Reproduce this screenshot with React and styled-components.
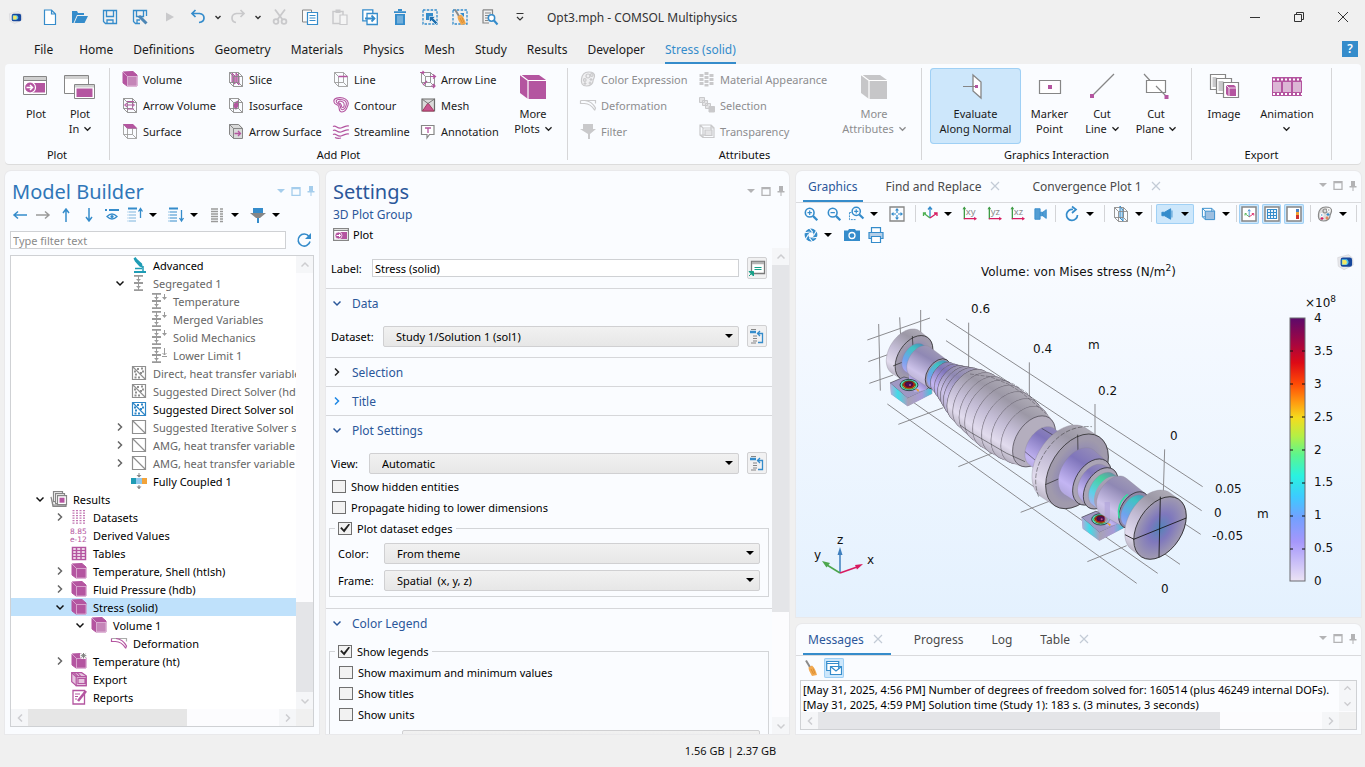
import React from "react";
import styled, { createGlobalStyle, css } from "styled-components";

const P = "#b455a0";
const G = "#868686";
const B = "#358ccb";
const L = "#c9c9cb";

const Global = createGlobalStyle`
  * { box-sizing: border-box; }
  body { margin: 0; background: #f0f0f0; color: #1a1a1a; overflow: hidden;
    font: 11px/15px "Noto Sans", "Open Sans", sans-serif; }
  button, input, select { font: inherit; color: inherit; margin: 0; }
  button { background: none; border: 0; padding: 0; }
  svg { display: block; flex: none; }
  ul { list-style: none; margin: 0; padding: 0; }
`;

/* ---------- icons ---------- */

const Wire = ({ c = G }) => (
  <path d="M1.5 1.5h9v10h-9zM5.5 5.5h9v10h-9zM1.5 1.5l4 4M10.5 1.5l4 4M1.5 11.5l4 4M10.5 11.5l4 4" fill="none" stroke={c} opacity=".85" />
);
const Solid = ({ c = P, front = P }) => (
  <>
    <path d="M1 1l10-.5 4 3.500v11H5l-4-3z" fill={c} stroke={c} strokeLinejoin="round" />
    <path d="M5.500 5.500h9.500v9.500H5.500z" fill={front} stroke="#f3dcee" strokeOpacity=".7" strokeWidth=".8" />
    <path d="M1 1l4.500 4.500" stroke="#f3dcee" strokeOpacity=".7" strokeWidth=".8" />
  </>
);
const Magnifier = ({ sign }) => (
  <g fill="none" stroke={B} strokeWidth="1.800">
    <circle cx="6.500" cy="6.500" r="5" /><path d="M10.200 10.200l5 5" strokeWidth="2.600" />
    <path d={sign} strokeWidth="1.400" />
  </g>
);
const Seg = () => (
  <g stroke="#9a9a9a" fill="#9a9a9a">
    <path d="M3 .8h9M3 15.200h9M3 8h9" strokeWidth="1.800" /><path d="M7.500 1v14" />
    <path d="M5 4h5l-2.500 2.500zM5 11h5l-2.500 2.500z" stroke="none" />
  </g>
);
const SegSub = ({ base }) => (
  <g stroke="#9a9a9a" fill="#9a9a9a">
    <path d="M1 .8h9M1 15.200h9M1 8h9" strokeWidth="1.800" /><path d="M5.500 1v14M13.500 1v5" />
    <path d="M3 4h5L5.500 6.500zM3 11h5l-2.500 2.500z" stroke="none" />
    {base ? <path d="M11 9.500h5M13.500 2v6M11.500 6l2 2 2-2" fill="none" /> : <path d="M11 4h5l-2.500 3z" stroke="none" />}
  </g>
);
const Matrix = ({ c, dots }) => (
  <g fill="none" stroke={c}>
    <path d="M1.500 1.500h13v13h-13zM1.500 1.500l13 13" strokeWidth="1.200" />
    {dots && <path d="M6 4h2M10 3.500h2M11 6.500h2M3 6.500h2M4 9.500h2M7 12.500h2M3.500 12.500h2M9 8h2" strokeWidth="2" />}
  </g>
);
const Planes = ({ label }) => (
  <>
    <path d="M2.500 14V1.500" stroke="#3f9b45" strokeWidth="1.400" /><path d="M.5 3.500l2-3 2 3z" fill="#3f9b45" />
    <path d="M2 13.500h12" stroke="#d81b60" strokeWidth="1.400" /><path d="M13 11.500l3 2-3 2z" fill="#d81b60" />
    <text x="4" y="9.500" fontSize="10" fill="#8a8a8a" fontFamily="Noto Sans, sans-serif">{label}</text>
  </>
);
const Triad = () => (
  <g fill="none" strokeWidth="1.300">
    <path d="M8 12V1M6 3.500L8 1l2 2.500" stroke={B} /><path d="M8 12L1.500 7M4 7H1.500v3" stroke="#4caf50" />
    <path d="M8 12l6.500-4.500M12 7h3v3" stroke="#d81b60" />
  </g>
);
const Lines = ({ c = B, arrow }) => (
  <>
    <path d="M1 1.500h9" stroke={B} strokeWidth="2" />
    <path d="M2 5h7M2 8h7M2 11h7M2 14h7" stroke={c} strokeWidth="1.200" />
    <path d="M.5 5h1M.5 8h1M.5 11h1M.5 14h1" stroke={c} strokeWidth="1.200" />
    <path d={arrow} stroke={B} fill="none" strokeWidth="1.300" />
  </>
);
const Logo = () => (
  <>
    <path d="M1.500 4l9.500-2.500 3.500 3 .5 6L7 14.500l-5-3z" fill="#e9e9ec" stroke="#d4d4d8" strokeWidth=".6" />
    <rect x="4" y="4" width="10" height="8" rx="2" fill="#16479c" />
    <path d="M5 5.500h4.500q3 2.500 0 5H5z" fill="#55c4e8" /><path d="M5.500 6h3q2 2 0 4h-3z" fill="#f5e663" />
  </>
);
const Palette = ({ off }) => (
  <g stroke={off ? L : "#8a8a8a"} fill={off ? "#f0f0f2" : "#dcdcdc"} strokeWidth="1.200">
    <path d="M8.500 1C13 .8 15 3 14.500 5.500S13 8 13 10s-2 5-6.500 5S1 12 1.500 8 4 1.200 8.500 1z" />
    <circle cx="8" cy="5" r="2" /><circle cx="11.800" cy="4" r="1.300" fill={off ? "none" : "#8a8a8a"} stroke={off ? L : "#fff"} />
    <circle cx="4.800" cy="9" r="1.300" fill={off ? "none" : "#358ccb"} stroke={off ? L : "#fff"} />
    <path d="M3.500 12.500h3M5 11v3" stroke={off ? L : "#d81b60"} /><path d="M9.500 8.500h3M11 7v3" stroke={off ? L : "#358ccb"} />
    <path d="M8.500 12h3M10 10.500v3" stroke={off ? L : "#e8743b"} />
  </g>
);
const Deform = ({ c, d }) => (
  <g fill="none" stroke={c} strokeWidth="1.200">
    <path d="M.5 3.500h15v3" stroke={d} /><path d="M.5 3.500v3h4C9 6.500 12 9 14.500 13M5 3.500C10 4 13 6.500 15.500 11l-1 2.500" />
  </g>
);
const Broom = () => (
  <>
    <path d="M3 .5L7.500 8" stroke="#8a8a8a" strokeWidth="2" />
    <path d="M5.500 7.500l3.500-2c3 2.500 4 6 5 9.500l-5 1C7.500 12.500 5.500 11 5.500 7.500z" fill="#f2a950" />
    <path d="M8 9l2.500 5M10 8.500l2 5" stroke="#c97c1e" strokeWidth=".6" />
  </>
);

const ICONS = {
  logo: <Logo />,
  doc: <path d="M2.500 1h7l4 4v10.500h-11zM9.500 1v4h4" fill="#fff" stroke={B} strokeWidth="1.200" />,
  open: <path d="M0 2h5l1 2h6v2H5l-3.500 8H0zM5.500 7H16l-3.500 7H2.500z" fill={B} />,
  save: <g fill="none" stroke={B} strokeWidth="1.300"><path d="M1.500 1.500h13v13h-11l-2-2zM4.500 1.500v6h7v-6M5 14.500V11h6v3.500" /></g>,
  saveas: <g fill="none" stroke={B} strokeWidth="1.300"><path d="M14.500 7V1.500h-13v11l2 2H8M4.500 1.500v6h7v-6M5 14V11h3" /><path d="M7 7l7.500 7.500" strokeWidth="3" stroke="#4d86b5" /></g>,
  play: <path d="M4 3.500l8 4.500-8 4.500z" fill={L} />,
  undo: <path d="M5.500 1L2 4.500 5.500 8M2 4.500h7.500q4.500.5 4.500 4.500t-5 4.500" fill="none" stroke={B} strokeWidth="1.700" />,
  redo: <path d="M10.500 1L14 4.500 10.500 8M14 4.500H6.500Q2 5 2 9t4 4.500" fill="none" stroke={L} strokeWidth="1.700" />,
  cut: <g fill="none" stroke={L} strokeWidth="1.800"><path d="M3 .5l7.500 10M13 .5L5.500 10.500" /><circle cx="4" cy="12.500" r="2.400" /><circle cx="12" cy="12.500" r="2.400" /></g>,
  copy: <><path d="M.5 1h9v12h-9z" fill="#fafafa" stroke={G} /><path d="M5.500 3.500h10v12h-10z" fill="#fff" stroke={B} strokeWidth="1.200" /><path d="M7.500 6.500h6M7.500 9h6M7.500 11.500h6" stroke={B} /></>,
  paste: <><path d="M1 2.500h10v12H1z" fill="none" stroke={L} strokeWidth="1.500" /><path d="M3.500.5h5V4h-5z" fill={L} /><path d="M8 6h7v9.500H8z" fill="#f5f5f5" stroke={L} strokeWidth="1.200" /></>,
  dup: <g fill="#fff" stroke={B} strokeWidth="1.300"><path d="M.8.8h10v11H.8z" /><path d="M5 4.500h10.300v11H5z" /><path d="M3 9.500h9M9.500 6.500l3 3-3 3" fill="none" strokeWidth="1.800" /></g>,
  trash: <><path d="M2 3.200h12M6 1h4" stroke={B} strokeWidth="1.800" /><path d="M3 5h10v11H3z" fill={B} /><path d="M6 6.500v8M8 6.500v8M10 6.500v8" stroke="#cfe4f4" strokeWidth=".8" /></>,
  select: <><path d="M1 1h14v14H1z" fill="none" stroke={B} strokeWidth="1.300" strokeDasharray="2.500 1.300" /><path d="M4 4h7v7H4z" fill={B} /><path d="M7.500 7.500h6l-2 1.800L15.500 13.500 13.500 15.500 9.500 11.500 7.500 13.500z" fill="#1f6fae" stroke="#fff" strokeWidth=".6" /></>,
  clear: <><path d="M1 1h14v14H1z" fill="none" stroke={B} strokeWidth="1.300" strokeDasharray="2.500 1.300" /><path d="M8 4h4v4z" fill={B} /><Broom /></>,
  find: <><path d="M1 .8h9.500V9M7 14H1V.8" fill="none" stroke={G} strokeWidth="1.200" /><path d="M3 4h6M3 6.500h5M3 9h3M3 11.500h3" stroke={G} /><circle cx="9.500" cy="9" r="3.200" fill="#fff" stroke={B} strokeWidth="1.500" /><path d="M12 11.500l3.500 4" stroke={B} strokeWidth="2" /></>,
  more: <path d="M4.500 4.500h7M5 8l3 3 3-3" fill="none" stroke="#333" strokeWidth="1.200" />,
  chev: <path d="M5.500 7L8 9.500 10.500 7" fill="none" stroke="#333" strokeWidth="1.400" />,
  min: <path d="M3 8.500h10" stroke="#333" />,
  restore: <path d="M3.500 5.500h7v7h-7zM5.500 5.500v-2h7v7h-2" fill="none" stroke="#333" />,
  close: <path d="M3 3l10 10M13 3L3 13" stroke="#333" />,
  tabx: <path d="M4 4l8 8M12 4l-8 8" stroke="#c3cbd6" strokeWidth="1.200" />,
  volume: <Solid front="#c585b8" />,
  solid: <Solid />,
  solidStar: <><Solid /><circle cx="12.500" cy="2.500" r="3.600" fill="#fff" /><path d="M12.500 0v5.500M9.700 2.700h5.600M10.500.7l4 4M14.500.7l-4 4" stroke="#808080" /></>,
  arrowvol: <><Wire /><path d="M3 8h9M5 6L2.500 8 5 10M10 6l2.500 2-2.500 2M5 4.500h7M5 12h7" fill="none" stroke={P} /></>,
  surface: <><Wire c="#999" /><path d="M1 1h10l4.500 4.500H5z" fill={P} /></>,
  slice: <><path d="M4 2l3 3v8l-3-2zM8 2l3 3v9l-3-3z" fill="#c78bbb" stroke={P} /><Wire /></>,
  iso: <><path d="M7 5l4-2v5l-3 5-3-4z" fill={P} /><Wire /></>,
  arrowsurf: <><path d="M1 1h10l4 4v10H5l-4-4z" fill="#d9d9d9" /><path d="M1.500 1.500h9l4 4h-9zM1.500 1.500v10l4 4v-10M5.500 5.500h9v10h-9z" fill="none" stroke={G} /><path d="M6.500 10.500H12M10 8l2.500 2.500L10 13" fill="none" stroke={P} strokeWidth="1.300" /></>,
  line: <><Wire c="#999" /><path d="M5.500 5.500h9" stroke={P} strokeWidth="1.500" /></>,
  contour: <g fill="none" stroke={P} strokeWidth="1.100"><path d="M1 5C0 1 6 0 10 1s6 4 5 7-2 7-6 7-2-4-3.500-6S1.500 8 1 5z" /><path d="M3.300 4.700c-.5-2.500 3-2.500 6-2s4.500 2.500 4 5-1.500 5-4 5-1-2.500-2.500-4.500-3-1.500-3.500-3.500z" /><path d="M5.500 5c0-1.500 5-1 5.500 1.500s0 4-1.500 4-.5-1.500-1.500-3S5.500 6.500 5.500 5z" /></g>,
  stream: <path d="M0 3.500c3-2 4 2.500 8 1.500s5-3 8-2M0 7.500c3-2 4 2.500 8 1.500s5-3 8-2M0 11.500c3-2 4 2.500 8 1.500s5-3 8-2M2 14.500c2 1 4 1 6 .5" fill="none" stroke={P} strokeWidth="1.200" />,
  arrowline: <><Wire /><path d="M0 1.500h4M2.500 0L4 1.500 2.500 3M10 5.500h5M13 3.500l2.500 2-2.500 2M3 14l4-4M11 15h4M13 13l2 2-2 2" fill="none" stroke={P} strokeWidth="1.200" /></>,
  mesh: <><path d="M2 2h12.500v12H2z" fill="#dadada" stroke="#6b6b6b" strokeWidth="1.200" /><path d="M8 6l-5.500 8h11.500z" fill="#c85590" stroke="#a33b5e" /><path d="M2 2l6 4.500L14.500 2" fill="none" stroke="#777" /></>,
  annot: <><path d="M1.500 2.500h12.500v9H9.500l-2.500 3.500v-3.500H1.500z" fill="#fff" stroke={G} strokeWidth="1.200" /><path d="M5 5h6M8 5v5" stroke={P} strokeWidth="1.300" /></>,
  palette: <Palette />,
  paletteOff: <Palette off />,
  deformOff: <Deform c={L} d={L} />,
  deform: <Deform c={P} d="#aaa" />,
  filterOff: <path d="M3 1h10v5h3l-6 5v5H8v-5L0 6h3z" fill={L} />,
  matOff: <path d="M5.500 1h4v3h-4zM5.500 5h4v3h-4zM5.500 9h4v3h-4zM5.500 13h4v2.500h-4zM.5 3h4v3h-4zM.5 7h4v3h-4zM.5 11h4v3h-4zM10.500 3h4v3h-4zM10.500 7h4v3h-4zM10.500 11h4v3h-4z" fill={L} />,
  selOff: <g fill="#e4e4e6" stroke={L}><path d="M.5.5h5v5h-5zM3.500 3.500h5v5h-5zM6.500 6.500h5v5h-5z" /><path d="M10 9.500h5.500V15H10z" fill={L} /></g>,
  transOff: <g fill="none" stroke={L} strokeWidth="1.200"><path d="M1 2h11v10H1zM4 5h11v9.500H4zM1 2l3 3M12 2l3 3M1 12l3 2.500" /><path d="M6 7h7v5.500H6z" fill="#e4e4e6" /></g>,
  plotBig: <><path d="M1.500 3.500h23v18h-23z" fill="#fff" stroke={G} /><path d="M2 4h22v3.500H2z" fill="#d0d0d0" /><path d="M1 7.500h24" stroke={G} /><path d="M10 10h13v9.500H10z" fill={P} /><circle cx="8" cy="14.500" r="5.500" fill={P} stroke="#fff" strokeWidth="1.200" /><path d="M4.500 14.500h6M8 12l2.500 2.500L8 17" stroke="#fff" strokeWidth="1.500" fill="none" /></>,
  plotin: <><path d="M-1.500 2.500h24v18h-24z" fill="#fff" stroke={G} /><path d="M-1 3h23v3H-1z" fill="#d0d0d0" /><path d="M8.500 11.500h20v14h-20z" fill="#fff" stroke={G} /><path d="M9 12h19v2.500H9z" fill="#d0d0d0" /><path d="M10.500 15.500h16v8.500h-16z" fill={P} /></>,
  cubeBig: <><path d="M1 2h19l7 5v19H9l-8-6z" fill={P} /><path d="M1 1.500l8 6V26.500M9 7.500h18" stroke="#fff" strokeWidth="1.200" fill="none" /></>,
  cubeBigOff: <><path d="M1 2h19l7 5v19H9l-8-6z" fill="#c6c6c8" /><path d="M1 1.500l8 6V26.500M9 7.500h18" stroke="#fff" strokeWidth="1.200" fill="none" /></>,
  evalBig: <><path d="M11 2l8 7v16l-8-7z" fill="#fff" stroke={G} strokeWidth="1.300" /><path d="M1 13.500h13" stroke={G} /><path d="M13 12h3v3h-3z" fill={P} /></>,
  marker: <><path d="M3.500 7.500h21v13h-21z" fill="#fff" stroke={G} strokeWidth="1.200" /><path d="M12 12h4v4h-4z" fill={P} /></>,
  cutline: <><path d="M4 23L26 1" stroke={G} strokeWidth="1.200" /><path d="M2 21h4v4H2z" fill={P} /></>,
  cutplane: <><path d="M4.500 7.500h19v12h-19z" fill="#fff" stroke={G} strokeWidth="1.200" /><path d="M2 1l6 6.500M14 13l10 10" stroke={G} strokeWidth="1.200" /><path d="M22.500 22h4v4h-4z" fill={P} /></>,
  image: <g fill="#fff" stroke={G} strokeWidth="1.200"><path d="M.500 1.500h15v15h-15z" /><path d="M2.500 4h4v10h-4z" fill={L} stroke="none" /><path d="M6.500 5.500h15v15h-15z" /><path d="M8.500 8h5v10h-5z" fill={L} stroke="none" /><path d="M13.500 9.500h15v15h-15z" /><path d="M16 12h8l2 2v9h-8l-2-2z" fill={P} stroke="none" /><path d="M16 12l3 3h7M19 15v8" stroke="#fff" fill="none" strokeWidth=".8" /></g>,
  film: <><path d="M-1 4h30v19H-1z" fill={P} /><path d="M0 9h8v10H0zM10 9h8v10h-8zM20 9h8v10h-8z" fill="#dcb6d5" /><path d="M0 6.500h29M0 21h29" stroke="#fff" strokeWidth="2" strokeDasharray="2 2" /></>,
  left: <path d="M15 8H2M6 4.500L2 8l4 3.500" fill="none" stroke={B} strokeWidth="1.500" />,
  right: <path d="M1 8h13M10 4.500L14 8l-4 3.500" fill="none" stroke="#9a9a9a" strokeWidth="1.500" />,
  up: <path d="M8 15V2M5 6L8 2l3 4" fill="none" stroke={B} strokeWidth="1.500" />,
  down: <path d="M8 1v13M5 10l3 4 3-4" fill="none" stroke={B} strokeWidth="1.500" />,
  eye: <><path d="M1 3h2M5 3h10" stroke={B} strokeWidth="2" /><path d="M3 9.500q5-5 10 0-5 5-10 0z" fill="none" stroke={B} strokeWidth="1.300" /><circle cx="8" cy="9.500" r="1.600" fill={B} /></>,
  linesUp: <Lines c="#7cb3dd" arrow="M13.500 11V2M11.500 4.500l2-3 2 3" />,
  linesDown: <Lines arrow="M13.500 3v10M11.500 11l2 3 2-3" />,
  columns: <path d="M2 2h7M2 4.500h7M2 7h7M2 9.500h7M2 12h7M2 14.500h7M11 2h3M11 4.500h3M11 7h3M11 9.500h3M11 12h3M11 14.500h3" stroke="#9a9a9a" strokeWidth="1.300" />,
  funnel: <><path d="M3 1h10v5H3z" fill={B} /><path d="M0 6h16l-6 5H6z" fill={G} /><path d="M7 11h2v5H7z" fill={B} /></>,
  refresh: <><path d="M13 4.500A6 6 0 1 0 14 9.500" fill="none" stroke={B} strokeWidth="1.600" /><path d="M15 1v6H9z" fill={B} /></>,
  scope: <g fill="#1f9cb5"><path d="M2.500 1.500L4.500 0 6 2l5 4.500 1 4.500-3.500-1.500L4 4.500z" /><path d="M3 14h12v2H3z" /><path d="M4 11.500h7M12 9v5" stroke="#1f9cb5" strokeWidth="1.500" /></g>,
  seg: <Seg />,
  sub: <SegSub />,
  subBase: <SegSub base />,
  matrix: <Matrix c="#8f8f8f" dots />,
  matrixOn: <Matrix c="#2f86c6" dots />,
  diag: <Matrix c="#8f8f8f" />,
  coupled: <><path d="M0 5h5v6H0z" fill="#1f9cb5" /><path d="M5 5h6v6H5z" fill="#8fc8ee" /><path d="M11 5h5v6h-5z" fill="#f2a33a" /><path d="M8 0v4M8 12v4" stroke={G} /><path d="M5.500 2h5L8 4.500zM5.500 13.500h5L8 16z" fill={G} /></>,
  results: <g fill="#fff" stroke={G} strokeWidth="1.200"><path d="M0 6l2 8h13v1.500H2z" fill="#ccc" /><path d="M2.500.7h9v10h-9z" /><path d="M4.500 2.700h9v10h-9z" /><path d="M6.500 4.700h9v9h-9z" /><path d="M8.500 6.700h5v5h-5z" fill={P} stroke="none" /></g>,
  datasets: <path d="M2.500 1v14M6 1v14M9.500 1v14M13 1v14" stroke={P} strokeWidth="2" strokeDasharray="1.300 1.200" opacity=".8" />,
  derived: <g fill={P} fontFamily="DejaVu Sans, sans-serif" fontSize="7.500"><text x="-1" y="7">8.85</text><text x="-1" y="15">e-12</text></g>,
  table: <path d="M1.500 2.500h13v12h-13zM1.500 5.500h13M1.500 8.500h13M1.500 11.500h13M5.500 2.500v12M10 2.500v12" fill="none" stroke={P} strokeWidth="1.500" />,
  export: <g fill="#e5c5df" stroke={P} strokeWidth="1.200"><path d="M.7 1.700h10l4.500 3v10h-10l-4.500-4z" /><path d="M5.200 5.700h10v9h-10zM.7 1.700l4.500 4M7 7.500h7v5H7zM3 1.700l4 4M6 1.700l4 4" /></g>,
  reports: <><path d="M2 1.500h11.500v13.500H2z" fill="#fff" stroke={P} strokeWidth="1.300" /><path d="M4 5h5M4 7.500h3M4 10h2" stroke={P} /><path d="M15 2L7 12" stroke={P} strokeWidth="2.600" /></>,
  plot: <><path d="M.6 2.600h14.800v11.800H.6z" fill="#fff" stroke={G} strokeWidth="1.200" /><path d="M1 4.500h14" stroke={G} /><path d="M7 6h7v7H7z" fill={P} /><circle cx="5.500" cy="9.500" r="3.500" fill={P} stroke="#fff" strokeWidth=".7" /><path d="M3.500 9.500h4M6 8l1.500 1.500L6 11" stroke="#fff" fill="none" /></>,
  goto: <><path d="M2.500 1.500h13v12h-13z" fill="#fff" stroke="#7a7a7a" strokeWidth="1.300" /><path d="M3 3h12" stroke="#b5b5b5" strokeWidth="2.500" /><path d="M5.500 7.500h7M5.500 9.500h7" stroke="#17a088" strokeWidth="1.200" /><path d="M0 16l3.500-3.500M0 11.500h4.500V16z" fill="#17a088" stroke="#17a088" /></>,
  tree: <><path d="M2 1.500h5M4 8h4M4 10.500h4M4 13h4M2 15h5" stroke={G} strokeWidth="1.200" /><path d="M1 4h6" stroke={B} strokeWidth="2.500" /><path d="M8 5.500h5.500v9H9M11 3L8.500 5.500 11 8" fill="none" stroke={B} strokeWidth="1.300" /></>,
  zoomin: <Magnifier sign="M4 6.500h5M6.500 4v5" />,
  zoomout: <Magnifier sign="M4 6.500h5" />,
  zoombox: <><path d="M.5 7v7.500H8M.5 7H3" fill="none" stroke={B} strokeDasharray="2 1" /><g transform="translate(2 0) scale(.88)"><Magnifier sign="M4 6.500h5M6.500 4v5" /></g></>,
  fit: <><path d="M1 1h14v14H1z" fill="none" stroke={G} strokeWidth="1.300" /><path d="M8 2l2 2.500H6zM8 14l-2-2.500h4zM2 8l2.500-2v4zM14 8l-2.500 2V6z" fill={B} /><path d="M8 4v3M8 9v3M4 8h3M9 8h3" stroke={B} strokeWidth="1.200" /></>,
  triad: <Triad />,
  xy: <Planes label="xy" />, yz: <Planes label="yz" />, xz: <Planes label="xz" />,
  book: <path d="M1 2h6v12H1zM7 6h3l4-3v10l-4-3H7M10 6v4" fill={B} stroke={B} fillOpacity=".85" />,
  rotate: <path d="M9 3.500A5.500 5.500 0 1 0 13.500 9M8 .5l4 3-4 3.500" fill="none" stroke={B} strokeWidth="1.700" />,
  clip: <><path d="M7 0l3 4v11l-3-3z" fill="#bcd9ee" stroke={B} /><Wire /></>,
  light: <path d="M1 6h3l7-4v12L4 10H1zM12.500 4v8" fill={B} stroke={B} />,
  trans: <g stroke={B} fill="#9dbfe0"><path d="M1.500 2.500h10v9h-10z" fill="none" /><path d="M4.500 5.500h10v9h-10z" /><path d="M1.500 2.500l3 3M11.500 2.500l3 3M1.500 11.500l3 3" /></g>,
  axesOn: <><path d="M1 1h14v14H1z" fill="#fff" stroke={G} strokeWidth="1.500" /><g transform="translate(3 3) scale(.65)"><Triad /></g></>,
  gridOn: <><path d="M1 1h14v14H1z" fill="#fff" stroke={G} strokeWidth="1.500" /><path d="M3.500 3.500h9v9h-9zM3.500 6.500h9M3.500 9.500h9M6.500 3.500v9M9.500 3.500v9" fill="none" stroke={B} strokeWidth="1.200" /></>,
  legendOn: <><path d="M1 1h14v14H1z" fill="#fff" stroke={G} strokeWidth="1.500" /><path d="M10 3h3v3h-3z" fill="#4a7fc0" /><path d="M10 6h3v3h-3z" fill="#f0a030" /><path d="M10 9h3v4h-3z" fill="#d0312d" /></>,
  shutter: <><circle cx="8" cy="8" r="5.200" fill="none" stroke={B} strokeWidth="4.200" /><path d="M6 0l4 5M14 3.500l-3 5M15.500 10.500l-6 1M10 16l-4-5M2 12.500l3-5M.5 5.500l6-1" stroke="#fafcff" strokeWidth="1.200" /></>,
  camera: <><path d="M0 3.500h4L5 2h6l1 1.500h4V14H0z" fill={B} /><circle cx="8" cy="8.500" r="3" fill={B} stroke="#fff" strokeWidth="1.300" /></>,
  printer: <g fill="#fff" stroke={B} strokeWidth="1.200"><path d="M3.500.7h9v5h-9z" /><path d="M1 5.500h14v6H1z" fill="#b5cfe8" /><path d="M3.500 9.500h9v6h-9z" /></g>,
  broom: <Broom />,
  mail: <g fill="#fff" stroke={B} strokeWidth="1.200"><path d="M.7 1.500h12v9H.7z" /><path d="M1 3.500h12" /><path d="M4.500 6.500h11v8h-11zM4.500 6.500l5.500 4.500 5.500-4.500" /></g>,
};

const Icon = ({ name, size = 16, box = 16 }) => (
  <svg width={size} height={size} viewBox={`0 0 ${box} ${box}`} overflow="visible" aria-hidden="true">{ICONS[name]}</svg>
);

const Caret = styled.i`
  width: 0; height: 0; flex: none;
  border: solid transparent; border-width: 4px 4px 0;
  border-top-color: ${(p) => p.$color || "#000"};
`;

const Chevron = ({ dir = "down", color = "#222", size = 8 }) => (
  <svg width={size} height={size} viewBox="0 0 8 8" aria-hidden="true">
    <path d={{ down: "M.5 2.500L4 6l3.500-3.500", right: "M2 .5L5.500 4 2 7.500", up: "M.5 5.500L4 2l3.500 3.500", left: "M6 .5L2.500 4 6 7.500" }[dir]} fill="none" stroke={color} strokeWidth="1.500" />
  </svg>
);

/* ---------- frame ---------- */

const Shell = styled.div`
  display: flex; flex-direction: column; height: 100vh; min-width: 1100px;
`;
const TitleBar = styled.header`
  display: flex; align-items: center; height: 34px; padding-left: 8px; flex: none;
`;
const LogoCell = styled.span`width: 27px;`;
const ToolButton = styled.button`
  display: flex; align-items: center; justify-content: center;
  width: ${(p) => p.$w || 30}px; height: 30px;
`;
const WindowTitle = styled.h1`
  font-size: 12px; font-weight: 400; color: #333; margin: 0 auto 0 12px;
`;
const MenuBar = styled.nav`
  display: flex; height: 30px; padding: 0 7px 0 34px; flex: none; align-items: stretch;
`;
const MenuItem = styled.button`
  font-size: 12px; margin-right: 20px;
  border-bottom: 2px solid transparent; border-top: 2px solid transparent;
  &:first-child { margin-right: 26px; }
  ${(p) => p.$active && css`color: ${B}; border-bottom-color: ${B};`}
`;
const Help = styled.button`
  margin: 7px 0 0 auto; width: 16px; height: 16px; background: ${B}; color: #fff; font-size: 12px; line-height: 16px; font-weight: 600;
`;
const Ribbon = styled.section`
  display: flex; height: 100px; margin: 0 4px 7px 5px; flex: none;
  background: #fafcff; border-radius: 4px; box-shadow: 0 1px 0 #dcdcdc;
`;
const Group = styled.div`
  display: flex; flex-direction: column; width: ${(p) => p.$w}px;
  border-right: 1px solid #d6d6d8; border-image: linear-gradient(transparent 5%, #d6d6d8 5% 95%, transparent 95%) 1;
`;
const GroupBody = styled.div`
  display: flex; height: 83px; padding: 2px 0 0 ${(p) => p.$pad || 0}px;
`;
const GroupName = styled.div`text-align: center; color: #111;`;
const SmallGrid = styled.div`
  display: grid; grid-template-columns: ${(p) => p.$cols}; grid-template-rows: repeat(3, 26px); grid-auto-flow: column;
`;
const SmallButton = styled.button`
  display: flex; align-items: center; gap: 5px; white-space: nowrap;
  ${(p) => p.disabled && css`color: #8d8d8f;`}
`;
const BigButton = styled.button`
  display: flex; flex-direction: column; align-items: center; gap: 5px;
  width: ${(p) => p.$w}px; height: 76px; margin-top: 2px; padding-top: 5px; white-space: nowrap;
  border-radius: 4px;
  ${(p) => p.disabled && css`color: #8d8d8f;`}
  ${(p) => p.$active && css`background: #cde7fb; box-shadow: inset 0 0 0 1px #9fd0f5;`}
`;
const Second = styled.span`display: flex; justify-content: center; align-items: center; gap: 5px; height: 15px;`;

const Big = ({ icon, w, l1, l2, menu, active, disabled }) => (
  <BigButton $w={w} $active={active} disabled={disabled}>
    <Icon name={icon} size={28} box={28} />
    <span>{l1}<Second>{l2}{menu && <Chevron size={7} color={disabled ? "#8d8d8f" : "#222"} />}</Second></span>
  </BigButton>
);

const Main = styled.main`
  flex: 1; min-height: 0; display: grid; gap: 7px; padding: 0 4px 0 5px;
  grid-template-columns: 314fr 463fr 565fr;
`;
const Panel = styled.section`
  background: #fafcff; border-radius: 6px 6px 0 0; display: flex; flex-direction: column;
  min-width: 0; min-height: 0; overflow: hidden; box-shadow: 0 0 0 1px #e9e9eb;
  flex: ${(p) => p.$flex || "none"};
`;
const Heading = styled.h2`
  font-size: 20px; line-height: 28px; font-weight: 400; color: #2b579a; margin: 0; flex: 1;
  ${(p) => p.$bright && css`color: #2f76b8;`}
`;
const HeadRow = styled.div`display: flex; align-items: center; padding: 7px 4px 0 7px;`;
const WinToolBox = styled.div`
  display: flex; gap: 6px; align-items: center; align-self: center; padding-bottom: 2px;
  color: ${(p) => (p.$blue ? "#a5cdec" : "#b3b3b5")};
`;
const WinTools = ({ blue }) => (
  <WinToolBox $blue={blue}>
    <svg width="8" height="9" viewBox="0 0 8 9"><path d="M0 2h8L4 6z" fill="currentColor" /></svg>
    <svg width="10" height="9" viewBox="0 0 10 9"><path d="M1 .5h8v8H1zM1 1.500h8" fill="none" stroke="currentColor" strokeWidth="1.300" /></svg>
    <svg width="8" height="10" viewBox="0 0 8 10"><path d="M2 0h4v5h1.500v1.500h-3V10h-1V6.500H.5V5H2z" fill="currentColor" /></svg>
  </WinToolBox>
);

/* ---------- scroll bars ---------- */

const VBar = styled.div`
  width: 17px; display: flex; flex-direction: column; background: #fcfcfe; flex: none;
`;
const HBar = styled.div`height: 17px; display: flex; background: #fcfcfe; flex: none;`;
const ScrollButton = styled.button`
  width: 17px; height: ${(p) => p.$h || 17}px; background: #f5f6f8; display: flex; align-items: center; justify-content: center; flex: none;
`;
const Thumb = styled.div`background: ${(p) => p.$bg || "#e4e5e8"}; flex: ${(p) => p.$f};`;
const Space = styled.div`flex: ${(p) => p.$f};`;

/* ---------- model builder ---------- */

const TreeTools = styled.div`display: flex; align-items: center; height: 18px; padding-left: 7px; gap: 7px;`;
const TreeTool = styled.button`display: flex; align-items: center; gap: 6px; width: ${(p) => p.$w || 16}px;`;
const FilterRow = styled.div`display: flex; align-items: center; gap: 10px; padding: 7px 7px 6px 5px;`;
const TextBox = styled.input`
  height: 18px; flex: 1; min-width: 0; background: #fff; border: 1px solid #cfd1d4; padding: 0 2px; outline: 0;
  &::placeholder { color: #8a8a8a; }
`;
const Tree = styled.div`
  flex: 1; min-height: 0; margin: 0 5px 7px; background: #fff; border: 1px solid #cfd1d4;
  display: flex; flex-direction: column;
`;
const TreeArea = styled.div`display: flex; flex: 1; min-height: 0;`;
const TreeList = styled.ul`flex: 1; min-width: 0; overflow: hidden;`;
const TreeRow = styled.li`
  display: flex; align-items: center; height: 18px; white-space: nowrap; padding-left: ${(p) => 25 + p.$lvl * 20}px;
  color: ${(p) => (p.$dim ? "#666" : "#000")};
  ${(p) => p.$sel && css`background: #bfe1fb;`}
`;
const Twist = styled.span`width: 15px; display: flex; flex: none;`;
const NodeIcon = styled.span`width: 22px; display: flex; flex: none;`;
const Corner = styled.div`width: 17px; background: #f0f0f0;`;

const NODES = [
  [4, "", "scope", "Advanced"],
  [4, "down", "seg", "Segregated 1", 1],
  [5, "", "sub", "Temperature", 1],
  [5, "", "sub", "Merged Variables", 1],
  [5, "", "sub", "Solid Mechanics", 1],
  [5, "", "subBase", "Lower Limit 1", 1],
  [4, "", "matrix", "Direct, heat transfer variable", 1],
  [4, "", "matrix", "Suggested Direct Solver (hd", 1],
  [4, "", "matrixOn", "Suggested Direct Solver sol"],
  [4, "right", "diag", "Suggested Iterative Solver s", 1],
  [4, "right", "diag", "AMG, heat transfer variable", 1],
  [4, "right", "diag", "AMG, heat transfer variable", 1],
  [4, "", "coupled", "Fully Coupled 1"],
  [0, "down", "results", "Results"],
  [1, "right", "datasets", "Datasets"],
  [1, "", "derived", "Derived Values"],
  [1, "", "table", "Tables"],
  [1, "right", "solid", "Temperature, Shell (htlsh)"],
  [1, "right", "solid", "Fluid Pressure (hdb)"],
  [1, "down", "solid", "Stress (solid)", 0, 1],
  [2, "down", "volume", "Volume 1"],
  [3, "", "deform", "Deformation"],
  [1, "right", "solidStar", "Temperature (ht)"],
  [1, "", "export", "Export"],
  [1, "", "reports", "Reports"],
];

function ModelBuilder() {
  return (
    <Panel>
      <HeadRow><Heading $bright>Model Builder</Heading><WinTools blue /></HeadRow>
      <TreeTools>
        {["left", "right", "up", "down", "eye"].map((n) => <TreeTool key={n} aria-label={n}><Icon name={n} /></TreeTool>)}
        {["linesUp", "linesDown", "columns", "funnel"].map((n) => <TreeTool key={n} $w={34} aria-label={n}><Icon name={n} /><Caret /></TreeTool>)}
      </TreeTools>
      <FilterRow>
        <TextBox placeholder="Type filter text" aria-label="Filter" />
        <button aria-label="Refresh"><Icon name="refresh" /></button>
      </FilterRow>
      <Tree>
        <TreeArea>
          <TreeList>
            {NODES.map(([lvl, tw, icon, text, dim, sel], i) => (
              <TreeRow key={i} $lvl={lvl} $dim={dim} $sel={sel}>
                <Twist>{tw && <Chevron dir={tw} color={tw === "right" ? "#666" : "#111"} />}</Twist>
                <NodeIcon><Icon name={icon} /></NodeIcon>{text}
              </TreeRow>
            ))}
          </TreeList>
          <VBar>
            <ScrollButton aria-label="Up"><Chevron dir="up" color="#cdcdd0" /></ScrollButton>
            <Space $f={329} /><Thumb $f={90} />
            <ScrollButton aria-label="Down"><Chevron color="#cdcdd0" /></ScrollButton>
          </VBar>
        </TreeArea>
        <HBar>
          <ScrollButton aria-label="Left"><Chevron dir="left" color="#cdcdd0" /></ScrollButton>
          <Thumb $f={159} $bg="#e6e6e6" /><Space $f={92} />
          <ScrollButton aria-label="Right"><Chevron dir="right" color="#cdcdd0" /></ScrollButton>
          <Corner />
        </HBar>
      </Tree>
    </Panel>
  );
}

/* ---------- settings ---------- */

const SubHead = styled.div`font-size: 12px; line-height: 18px; color: #2b579a; padding-left: 7px;`;
const PlotButton = styled.button`display: flex; align-items: center; gap: 4px; height: 20px; margin-bottom: 4px; padding-left: 7px; align-self: flex-start; color: #000;`;
const Scroller = styled.div`display: flex; flex: 1; min-height: 0;`;
const Form = styled.div`flex: 1; min-width: 0; overflow: hidden; color: #000;`;
const Section = styled.section`
  border-top: 1px solid #d6d7da;
  &:first-child { border: 0; }
`;
const SectionTitle = styled.button`
  display: flex; align-items: center; gap: 11px; height: 28px; padding-left: 7px; width: 100%;
  font-size: 12px; color: #2b579a;
`;
const Field = styled.div`
  display: flex; align-items: center; height: 22px; padding: 0 ${(p) => (p.$inner ? 0 : 5)}px;
  label { width: ${(p) => p.$label}px; flex: none; }
`;
const SquareButton = styled.button`
  width: 20px; height: 22px; margin-left: 8px; display: flex; align-items: center; justify-content: center;
  background: #f1f1f2; border: 1px solid #d0d0d2; border-radius: 2px; flex: none;
`;
const SelectWrap = styled.div`
  display: grid; flex: 1; align-items: center; height: 21px; min-width: 0;
  > * { grid-area: 1 / 1; }
  > i { justify-self: end; margin-right: 6px; pointer-events: none; }
`;
const Select = styled.select`
  appearance: none; width: 100%; height: 21px; padding: 0 20px 0 12px; border: 1px solid #d0d0d2; border-radius: 2px;
  background: linear-gradient(#f1f1f1, #e7e7e7); color: #000; outline: 0;
`;
const Drop = ({ id, value }) => (
  <SelectWrap><Select id={id} defaultValue={value}><option>{value}</option></Select><Caret /></SelectWrap>
);
const CheckLabel = styled.label`
  display: flex; align-items: center; gap: 5px; height: 21px; padding-left: ${(p) => p.$pad || 0}px; width: max-content;
`;
const Box = styled.input.attrs({ type: "checkbox" })`
  appearance: none; width: 14px; height: 13px; border: 1px solid #707070; background: #f2f2f2; flex: none;
  display: grid; place-items: center;
  &:checked::before { content: ""; width: 10px; height: 9px; background: #222;
    clip-path: polygon(2% 52%, 16% 40%, 38% 66%, 86% 2%, 100% 12%, 42% 100%); }
`;
const Frame = styled.fieldset`
  margin: 0 3px; padding: ${(p) => p.$top}px 8px 5px; border: 1px solid #d3d5d8; min-width: 0;
  legend { padding: 0 3px; margin-left: -3px; }
  legend label { height: 20px; }
`;
const Gap = styled.div`height: ${(p) => p.$h}px;`;

const Check = ({ text, on, pad }) => <CheckLabel $pad={pad}><Box defaultChecked={on} />{text}</CheckLabel>;

function Settings() {
  return (
    <Panel>
      <HeadRow><Heading>Settings</Heading><WinTools /></HeadRow>
      <SubHead>3D Plot Group</SubHead>
      <PlotButton><Icon name="plot" />Plot</PlotButton>
      <Scroller>
        <Form>
          <Section>
            <Gap $h={9} />
            <Field $label={41}>
              <label htmlFor="lbl">Label:</label><TextBox id="lbl" defaultValue="Stress (solid)" />
              <SquareButton aria-label="Edit label"><Icon name="goto" /></SquareButton>
            </Field>
            <Gap $h={9} />
          </Section>
          <Section>
            <SectionTitle><Chevron color="#2b579a" />Data</SectionTitle>
            <Gap $h={8} />
            <Field $label={52}>
              <label htmlFor="ds">Dataset:</label><Drop id="ds" value="Study 1/Solution 1 (sol1)" />
              <SquareButton aria-label="Go to dataset"><Icon name="tree" /></SquareButton>
            </Field>
            <Gap $h={10} />
          </Section>
          <Section><SectionTitle><Chevron dir="right" />Selection</SectionTitle></Section>
          <Section><SectionTitle><Chevron dir="right" color="#1e88e5" />Title</SectionTitle></Section>
          <Section>
            <SectionTitle><Chevron color="#2b579a" />Plot Settings</SectionTitle>
            <Gap $h={8} />
            <Field $label={38}>
              <label htmlFor="vw">View:</label><Drop id="vw" value="Automatic" />
              <SquareButton aria-label="Go to view"><Icon name="tree" /></SquareButton>
            </Field>
            <Gap $h={2} />
            <Check text="Show hidden entities" pad={6} />
            <Check text="Propagate hiding to lower dimensions" pad={6} />
            <Frame $top={4}>
              <legend><Check text="Plot dataset edges" on /></legend>
              <Field $label={46} $inner><label htmlFor="cl">Color:</label><Drop id="cl" value="From theme" /></Field>
              <Gap $h={5} />
              <Field $label={46} $inner><label htmlFor="fr">Frame:</label><Drop id="fr" value={"Spatial \u00a0(x, y, z)"} /></Field>
            </Frame>
            <Gap $h={11} />
          </Section>
          <Section>
            <SectionTitle><Chevron color="#2b579a" />Color Legend</SectionTitle>
            <Gap $h={4} />
            <Frame $top={1}>
              <legend><Check text="Show legends" on /></legend>
              <Check text="Show maximum and minimum values" pad={1} />
              <Check text="Show titles" pad={1} />
              <Check text="Show units" pad={1} />
              <Gap $h={4} />
              <Field $label={64} $inner><label htmlFor="ps">Position:</label><Drop id="ps" value="Right" /></Field>
            </Frame>
          </Section>
        </Form>
        <VBar>
          <ScrollButton aria-label="Up"><Chevron dir="up" color="#cdcdd0" /></ScrollButton>
          <Thumb $f={347} /><Space $f={105} />
          <ScrollButton aria-label="Down"><Chevron color="#cdcdd0" /></ScrollButton>
        </VBar>
      </Scroller>
    </Panel>
  );
}

/* ---------- tabs ---------- */

const Right = styled.div`display: flex; flex-direction: column; gap: 7px; min-width: 0; min-height: 0;`;
const Tabs = styled.div`
  display: flex; height: 32px; padding: 0 4px 0 7px; border-bottom: 1px solid #d9dadd; flex: none; align-items: stretch;
`;
const Tab = styled.button`
  display: flex; align-items: center; gap: 6px; padding: 1px 5px 0; margin-right: ${(p) => p.$gap}px; font-size: 12px; color: #4a4a4a;
  border-bottom: 2px solid transparent;
  ${(p) => p.$on && css`color: #2b579a; border-bottom-color: ${B};`}
`;
const Push = styled.span`flex: 1;`;
const BarRow = styled.div`display: flex; align-items: center; height: 21px; padding-left: 4px;`;
const Tool = styled.button`
  display: flex; align-items: center; justify-content: center; height: 20px; width: ${(p) => p.$w || 23}px; gap: 6px;
  ${(p) => p.$on && css`background: #cde7fb; box-shadow: inset 0 0 0 1px #9fd0f5; border-radius: 2px; width: ${p.$w || 20}px; margin-right: 3px;`}
`;
const Sep = styled.span`width: 1px; height: 17px; background: #d3d4d7; margin: 0 ${(p) => p.$r || 4}px 0 ${(p) => p.$l || 4}px;`;
const Canvas = styled.div`
  flex: 1; min-height: 0; background: linear-gradient(#fafcff, #f5f9ff 20%, #e4f1fe);
  > svg { width: 100%; height: 100%; }
`;

/* ---------- 3D plot ---------- */

const TILT = 0.569;
const RATIO = 0.645;
const ring = ([x, y, a]) => {
  const pts = [];
  for (let i = 0; i < 60; i++) {
    const t = (i / 60) * Math.PI * 2;
    const u = a * RATIO * Math.cos(t), v = a * Math.sin(t);
    pts.push([x + u * Math.cos(TILT) - v * Math.sin(TILT), y + u * Math.sin(TILT) + v * Math.cos(TILT)]);
  }
  return pts;
};
const hull = (pts) => {
  const s = [...pts].sort((p, q) => p[0] - q[0] || p[1] - q[1]);
  const cross = (o, p, q) => (p[0] - o[0]) * (q[1] - o[1]) - (p[1] - o[1]) * (q[0] - o[0]);
  const half = (list) => {
    const h = [];
    for (const p of list) {
      while (h.length > 1 && cross(h[h.length - 2], h[h.length - 1], p) <= 0) h.pop();
      h.push(p);
    }
    h.pop();
    return h;
  };
  return [...half(s), ...half(s.reverse())];
};
const str = (pts) => pts.map((p) => p.map((n) => n.toFixed(1)).join(",")).join(" ");

const Face = ({ at, fill = "none", stroke = "#222", w = 2 }) => (
  <ellipse rx={at[2] * RATIO} ry={at[2]} transform={`translate(${at[0]} ${at[1]}) rotate(32.6)`} fill={fill} stroke={stroke} strokeWidth={w} />
);
const Stage = ({ a, b, body = "url(#gray)", face = "#a79fb5", stroke, w }) => (
  <g>
    <polygon points={str(hull([...ring(a), ...ring(b)]))} fill={body} stroke="#8a8492" strokeWidth="1" />
    <Face at={b} fill={face} stroke={stroke} w={w} />
  </g>
);
const axisY = (x) => 222 + 0.704 * (x - 235);
const BARREL = [
  [235, 45], [250, 50], [266, 56], [281, 63], [296, 71], [311, 79], [328, 87], [350, 93], [372, 97],
  [392, 101], [418, 104], [444, 103], [470, 100], [495, 94], [522, 84],
].map(([x, r]) => [x, axisY(x), r]);

const Foot = () => (
  <g>
    <path d="M665 652l42-18 85 22v28l-74 38-50-36z" fill="#a99fc0" />
    <path d="M665 652l42-18 85 22-20 18-54 24z" fill="#9f98c4" stroke="#222" strokeWidth="1.500" />
    <path d="M665 652l53 45v25l-50-37z" fill="url(#foot)" />
    <path d="M718 697l72-33v20l-72 38z" fill="url(#footside)" />
    <path d="M722 612c0-18 50-10 54 20l-4 40-34 8-16-34z" fill="url(#purple)" />
    <ellipse cx="722" cy="658" rx="27" ry="17" fill="#53e0c0" stroke="#111" strokeWidth="2" />
    <ellipse cx="722" cy="658" rx="20" ry="12.500" fill="#f5d720" stroke="#111" strokeWidth="1.500" />
    <ellipse cx="722" cy="657" rx="17" ry="10.500" fill="#c3151d" stroke="#111" strokeWidth="1.500" />
    <ellipse cx="722" cy="656" rx="12" ry="7.500" fill="#4a0d55" stroke="#111" />
    <circle cx="725" cy="658" r="3" fill="#c05a8a" />
    <path d="M740 668l12 4-2 7z" fill="#f0a020" />
  </g>
);

const GRID = "M56 72L61 272M119 52L122 110M182 30V100M22 120L210 54M25 185L100 158M28 250L100 225M258 57L1028 560M258 122L1025 632M760 530L1022 703M900 752L960 793M82 312L830 850M150 300L893 820M326 68V208M508 187V300M705 312V402M914 448L910 575M115 373L250 323M295 500L420 450M482 637L570 603M682 785L800 737";

const SCALE = ["4", "3.5", "3", "2.5", "2", "1.5", "1", "0.5", "0"];
const MARKS = [[971, 313, "0.6"], [1033, 353, "0.4"], [1088, 349, "m"], [1098, 395, "0.2"], [1170, 440, "0"], [1215, 493, "0.05"], [1214, 517, "0"], [1257, 518, "m"], [1212, 540, "-0.05"], [1161, 593, "0"], [837, 544, "z"], [814, 559, "y"], [867, 564, "x"]];

function Plot3D() {
  return (
    <svg viewBox="796 245 565 372" role="img" aria-label="Volume: von Mises stress">
      <defs>
        <linearGradient id="gray" x1=".8" y1="0" x2=".25" y2="1">
          <stop offset="0" stopColor="#b3b0ba" /><stop offset=".25" stopColor="#9c98a6" /><stop offset=".55" stopColor="#c4bdd6" /><stop offset=".8" stopColor="#e2dcee" /><stop offset="1" stopColor="#b0abba" />
        </linearGradient>
        <linearGradient id="purple" x1=".8" y1="0" x2=".2" y2="1">
          <stop offset="0" stopColor="#9a92b8" /><stop offset=".35" stopColor="#7f75bb" /><stop offset=".75" stopColor="#c3b5f3" /><stop offset="1" stopColor="#a79fd0" />
        </linearGradient>
        <linearGradient id="lilac" x1=".8" y1="0" x2=".2" y2="1">
          <stop offset="0" stopColor="#a8a3b6" /><stop offset=".35" stopColor="#8f88b4" /><stop offset=".7" stopColor="#cdc3ea" /><stop offset="1" stopColor="#aca6c0" />
        </linearGradient>
        <linearGradient id="cyan" x1=".8" y1="0" x2=".2" y2="1">
          <stop offset="0" stopColor="#4f7fb8" /><stop offset=".3" stopColor="#3fc3c3" /><stop offset=".65" stopColor="#6fa3ee" /><stop offset="1" stopColor="#b9a6f0" />
        </linearGradient>
        <linearGradient id="green" x1=".8" y1="0" x2=".2" y2="1">
          <stop offset="0" stopColor="#6c86a8" /><stop offset=".3" stopColor="#46cf9d" /><stop offset=".7" stopColor="#5fd0e8" /><stop offset="1" stopColor="#b9a6f0" />
        </linearGradient>
        <linearGradient id="foot"><stop offset="0" stopColor="#b8aad8" /><stop offset=".45" stopColor="#40dce8" /><stop offset="1" stopColor="#a99fc0" /></linearGradient>
        <linearGradient id="footside"><stop offset="0" stopColor="#a8a2b4" /><stop offset=".6" stopColor="#a79ad8" /><stop offset="1" stopColor="#3fc8d8" /></linearGradient>
        <radialGradient id="disc"><stop offset="0" stopColor="#5583b8" /><stop offset=".45" stopColor="#7f78bd" /><stop offset="1" stopColor="#a19bb0" /></radialGradient>
        <radialGradient id="mid"><stop offset=".4" stopColor="#8a83b8" /><stop offset=".85" stopColor="#a09aac" /></radialGradient>
        <linearGradient id="scale" x1="0" y1="0" x2="0" y2="1">
          <stop offset="0" stopColor="#5c0a6b" /><stop offset=".1" stopColor="#a8063f" /><stop offset=".17" stopColor="#dd0a16" /><stop offset=".25" stopColor="#ff4a06" /><stop offset=".32" stopColor="#ff9a10" /><stop offset=".38" stopColor="#f5dc1e" />
          <stop offset=".45" stopColor="#b3f046" /><stop offset=".52" stopColor="#5cf58e" /><stop offset=".6" stopColor="#2af2e0" /><stop offset=".68" stopColor="#3dcbff" /><stop offset=".76" stopColor="#73a0ff" /><stop offset=".85" stopColor="#a597fb" /><stop offset="1" stopColor="#ebe3f4" />
        </linearGradient>
      </defs>

      <g transform="translate(860 300) scale(.33333)">
        <path d={GRID} stroke="#8b8b8f" strokeWidth="3" fill="none" />
        <Stage a={[137, 156, 76]} b={[162, 174, 74]} face="url(#mid)" />
        <path d="M157 108l4 65-62 25" stroke="#222" strokeWidth="2" fill="none" />
        <Stage a={[162, 174, 48]} b={[180, 186, 48]} body="url(#cyan)" stroke="none" />
        <g transform="translate(-575 -403)"><Foot /></g>
        <Stage a={[180, 184, 52]} b={[234, 222, 50]} stroke="#222" body="url(#lilac)" />
        {BARREL.slice(1).map((b, i) => (
          <Stage key={i} a={BARREL[i]} b={b} w={2} body={i < 1 ? "url(#cyan)" : i < 3 ? "url(#purple)" : i < 6 ? "url(#lilac)" : "url(#gray)"} stroke={i < 6 ? "#2b2830" : "#4a4650"} face="#b4aebe" />
        ))}
        <path d="M300 375L330 396L385 428L440 460L495 485" stroke="#222" strokeWidth="1.500" fill="none" />
        <path d="M330 222l60 8 54 22 40 25 40 34 34 30M425 238l35 14 40 26 36 36" stroke="#55505c" strokeWidth="1.500" fill="none" strokeDasharray="12 4" />
        <Stage a={[545, 440, 66]} b={[600, 479, 66]} body="url(#purple)" stroke="none" />
        <path d="M495 455l30 25M545 385l50 30" stroke="#222" strokeWidth="1.500" />
        <Stage a={[610, 487, 123]} b={[651, 514, 123]} face="url(#mid)" />
        <path d="M536 590q-30-80 40-160 50-55 120-50" stroke="#333" strokeWidth="1.500" fill="none" strokeDasharray="14 5" />
        <path d="M653 404l2 110M556 554l60-26" stroke="#222" strokeWidth="2" />
        <Stage a={[656, 516, 80]} b={[696, 546, 76]} body="url(#purple)" face="#aaa4b6" />
        <Stage a={[700, 549, 62]} b={[722, 565, 68]} body="url(#purple)" face="#aaa4b6" />
        <Stage a={[728, 568, 56]} b={[745, 580, 56]} body="url(#green)" stroke="none" />
        <Foot />
        <Stage a={[760, 588, 66]} b={[822, 630, 60]} face="#8e88a8" body="url(#lilac)" />
        <path d="M742 668v-62" stroke="#b3a6dc" strokeWidth="16" opacity=".7" />
        <Stage a={[822, 632, 52]} b={[872, 666, 52]} body="url(#cyan)" stroke="none" />
        <path d="M778 655q-10-45 25-72" stroke="#35dca0" strokeWidth="5" fill="none" />
        <Stage a={[873, 664, 103]} b={[900, 684, 103]} face="url(#disc)" stroke="#111" />
        <path d="M901 590l-4 182M821 718l158-64M795 704l27 14" stroke="#111" strokeWidth="2.500" fill="none" />
      </g>

      <g fontFamily="DejaVu Sans, Verdana, sans-serif" fontSize="12" fill="#111">
        <text x="981" y="276">Volume: von Mises stress (N/m<tspan fontSize="9" dy="-5">2</tspan><tspan dy="5">)</tspan></text>
        {MARKS.map(([x, y, t]) => <text key={t + x} x={x} y={y}>{t}</text>)}
        <text x="1305" y="307">×10<tspan fontSize="9" dy="-5">8</tspan></text>
        {SCALE.map((t, i) => <text key={t} x="1314" y={322 + i * 33 - (i > 4 ? 1 : 0)}>{t}</text>)}
      </g>
      <rect x="1290" y="318" width="15" height="263" fill="url(#scale)" stroke="#6b6b70" />
      <path d={SCALE.slice(1, 8).map((_, i) => `M1290 ${351 + i * 33}h3m9 0h3`).join("")} stroke="#111" />
      <g strokeWidth="1.500">
        <path d="M840 573V553" stroke="#3f7fbe" /><path d="M837.500 555l2.500-8 2.500 8z" fill="#3f7fbe" />
        <path d="M840 573l-13-8" stroke="#4ca64c" /><path d="M822 561l8 2-3.500 4.500z" fill="#4ca64c" />
        <path d="M840 573l17-6" stroke="#d81b60" /><path d="M863 564l-8 1 2 4.500z" fill="#d81b60" />
      </g>
      <g transform="translate(1336 253) scale(1.150)"><Logo /></g>
    </svg>
  );
}

function Graphics() {
  return (
    <Panel $flex="1">
      <Tabs>
        <Tab $on $gap={18}>Graphics</Tab>
        <Tab $gap={19}>Find and Replace<Icon name="tabx" /></Tab>
        <Tab $gap={0}>Convergence Plot 1<Icon name="tabx" /></Tab>
        <Push /><WinTools />
      </Tabs>
      <BarRow>
        <Tool aria-label="Zoom in"><Icon name="zoomin" size={14} /></Tool>
        <Tool aria-label="Zoom out"><Icon name="zoomout" size={14} /></Tool>
        <Tool aria-label="Zoom box" $w={36}><Icon name="zoombox" size={15} /><Caret /></Tool>
        <Tool aria-label="Zoom extents" $w={32}><Icon name="fit" /></Tool>
        <Sep $l={2} $r={3} /><Tool aria-label="View" $w={37}><Icon name="triad" /><Caret /></Tool>
        <Tool $w={28} aria-label="XY view"><Icon name="xy" size={15} /></Tool>
        <Tool aria-label="YZ view"><Icon name="yz" size={15} /></Tool>
        <Tool aria-label="XZ view"><Icon name="xz" size={15} /></Tool>
        <Tool aria-label="Side view"><Icon name="book" size={14} /></Tool>
        <Sep $l={3} /><Tool aria-label="Rotate" $w={38}><Icon name="rotate" /><Caret /></Tool>
        <Sep $l={6} /><Tool aria-label="Clip" $w={38}><Icon name="clip" /><Caret /></Tool>
        <Sep $l={5} /><Tool aria-label="Light" $w={38} $on><Icon name="light" size={14} /><Caret /></Tool>
        <Tool aria-label="Transparency" $w={38}><Icon name="trans" size={15} /><Caret /></Tool>
        <Sep $l={1} $r={2} />
        <Tool $on aria-label="Axes"><Icon name="axesOn" /></Tool>
        <Tool $on aria-label="Grid"><Icon name="gridOn" /></Tool>
        <Tool $on aria-label="Legend"><Icon name="legendOn" /></Tool>
        <Sep $l={3} $r={2} /><Tool aria-label="Color theme" $w={38}><Icon name="palette" /><Caret /></Tool>
        <Sep $l={5} />
      </BarRow>
      <BarRow>
        <Tool aria-label="Snapshot" $w={36}><Icon name="shutter" size={14} /><Caret /></Tool>
        <Tool $w={32} aria-label="Camera"><Icon name="camera" /></Tool>
        <Tool aria-label="Print" $w={16}><Icon name="printer" /></Tool>
      </BarRow>
      <Canvas><Plot3D /></Canvas>
    </Panel>
  );
}

/* ---------- messages ---------- */

const MsgTools = styled.div`display: flex; align-items: center; height: 24px; padding-left: 7px; gap: 5px;`;
const MsgBox = styled.div`
  margin: 0 4px 4px; border: 1px solid #cfd1d4; background: #fcfdff; display: flex; flex-direction: column; height: 50px; overflow: hidden;
`;
const MsgArea = styled.div`display: flex; height: 31px;`;
const MsgLines = styled.div`
  flex: 1; min-width: 0; overflow: hidden; display: flex; flex-direction: column; justify-content: flex-end;
  color: #000; white-space: nowrap; padding-left: 2px;
`;

function Messages() {
  return (
    <Panel>
      <Tabs>
        <Tab $on $gap={18}>Messages<Icon name="tabx" /></Tab>
        <Tab $gap={18}>Progress</Tab>
        <Tab $gap={18}>Log</Tab>
        <Tab $gap={0}>Table<Icon name="tabx" /></Tab>
        <Push /><WinTools />
      </Tabs>
      <MsgTools>
        <Tool $w={16} aria-label="Clear"><Icon name="broom" /></Tool>
        <Tool $on aria-label="Show in window"><Icon name="mail" /></Tool>
      </MsgTools>
      <MsgBox>
        <MsgArea>
          <MsgLines>
            <span>[May 31, 2025, 4:56 PM] Number of degrees of freedom solved for: 160514 (plus 46249 internal DOFs).</span>
            <span>[May 31, 2025, 4:59 PM] Solution time (Study 1): 183 s. (3 minutes, 3 seconds)</span>
          </MsgLines>
          <VBar>
            <ScrollButton $h={15} aria-label="Up"><Chevron dir="up" size={7} color="#cdcdd0" /></ScrollButton>
            <ScrollButton $h={15} aria-label="Down"><Chevron size={7} color="#cdcdd0" /></ScrollButton>
          </VBar>
        </MsgArea>
        <HBar>
          <ScrollButton aria-label="Left"><Chevron dir="left" color="#cdcdd0" /></ScrollButton>
          <Thumb $f={402} /><Space $f={102} />
          <ScrollButton aria-label="Right"><Chevron dir="right" color="#cdcdd0" /></ScrollButton>
          <Corner />
        </HBar>
      </MsgBox>
    </Panel>
  );
}

const Status = styled.footer`height: 33px; flex: none; text-align: center; line-height: 34px; padding-left: 96px; color: #111;`;

const ADD = [["volume", "Volume"], ["arrowvol", "Arrow Volume"], ["surface", "Surface"], ["slice", "Slice"], ["iso", "Isosurface"], ["arrowsurf", "Arrow Surface"], ["line", "Line"], ["contour", "Contour"], ["stream", "Streamline"], ["arrowline", "Arrow Line"], ["mesh", "Mesh"], ["annot", "Annotation"]];
const ATTR = [["paletteOff", "Color Expression"], ["deformOff", "Deformation"], ["filterOff", "Filter"], ["matOff", "Material Appearance"], ["selOff", "Selection"], ["transOff", "Transparency"]];
const MENUS = ["File", "Home", "Definitions", "Geometry", "Materials", "Physics", "Mesh", "Study", "Results", "Developer", "Stress (solid)"];
const QUICK = [["doc"], ["open"], ["save"], ["saveas"], ["play"], ["undo", 26], ["chev", 14], ["redo", 26], ["chev", 14], ["cut"], ["copy"], ["paste"], ["dup"], ["trash"], ["select"], ["clear"], ["find"], ["more"]];

export default function App() {
  return (
    <>
      <Global />
      <Shell>
        <TitleBar>
          <LogoCell><Icon name="logo" size={15} /></LogoCell>
          {QUICK.map(([n, w], i) => <ToolButton key={i} $w={w} aria-label={n}><Icon name={n} /></ToolButton>)}
          <WindowTitle>Opt3.mph - COMSOL Multiphysics</WindowTitle>
          {["min", "restore", "close"].map((n) => <ToolButton key={n} $w={44} aria-label={n}><Icon name={n} /></ToolButton>)}
        </TitleBar>
        <MenuBar>
          {MENUS.map((m) => <MenuItem key={m} $active={m === "Stress (solid)"}>{m}</MenuItem>)}
          <Help>?</Help>
        </MenuBar>
        <Ribbon>
          <Group $w={105}>
            <GroupBody $pad={8}>
              <Big icon="plotBig" w={46} l1="Plot" /><Big icon="plotin" w={42} l1="Plot" l2="In" menu />
            </GroupBody>
            <GroupName>Plot</GroupName>
          </Group>
          <Group $w={458}>
            <GroupBody $pad={12}>
              <SmallGrid $cols="106px 105px 87px 90px">{ADD.map(([i, t]) => <SmallButton key={t}><Icon name={i} />{t}</SmallButton>)}</SmallGrid>
              <Big icon="cubeBig" w={46} l1="More" l2="Plots" menu />
            </GroupBody>
            <GroupName>Add Plot</GroupName>
          </Group>
          <Group $w={354}>
            <GroupBody $pad={12}>
              <SmallGrid $cols="119px 139px">{ATTR.map(([i, t]) => <SmallButton key={t} disabled><Icon name={i} />{t}</SmallButton>)}</SmallGrid>
              <Big icon="cubeBigOff" w={72} l1="More" l2="Attributes" menu disabled />
            </GroupBody>
            <GroupName>Attributes</GroupName>
          </Group>
          <Group $w={270}>
            <GroupBody $pad={8}>
              <Big icon="evalBig" w={91} l1="Evaluate" l2="Along Normal" active />
              <Big icon="marker" w={57} l1="Marker" l2="Point" />
              <Big icon="cutline" w={48} l1="Cut" l2="Line" menu />
              <Big icon="cutplane" w={60} l1="Cut" l2="Plane" menu />
            </GroupBody>
            <GroupName>Graphics Interaction</GroupName>
          </Group>
          <Group $w={140}>
            <GroupBody>
              <Big icon="image" w={64} l1="Image" /><Big icon="film" w={62} l1="Animation" menu />
            </GroupBody>
            <GroupName>Export</GroupName>
          </Group>
        </Ribbon>
        <Main>
          <ModelBuilder />
          <Settings />
          <Right><Graphics /><Messages /></Right>
        </Main>
        <Status>1.56 GB | 2.37 GB</Status>
      </Shell>
    </>
  );
}
